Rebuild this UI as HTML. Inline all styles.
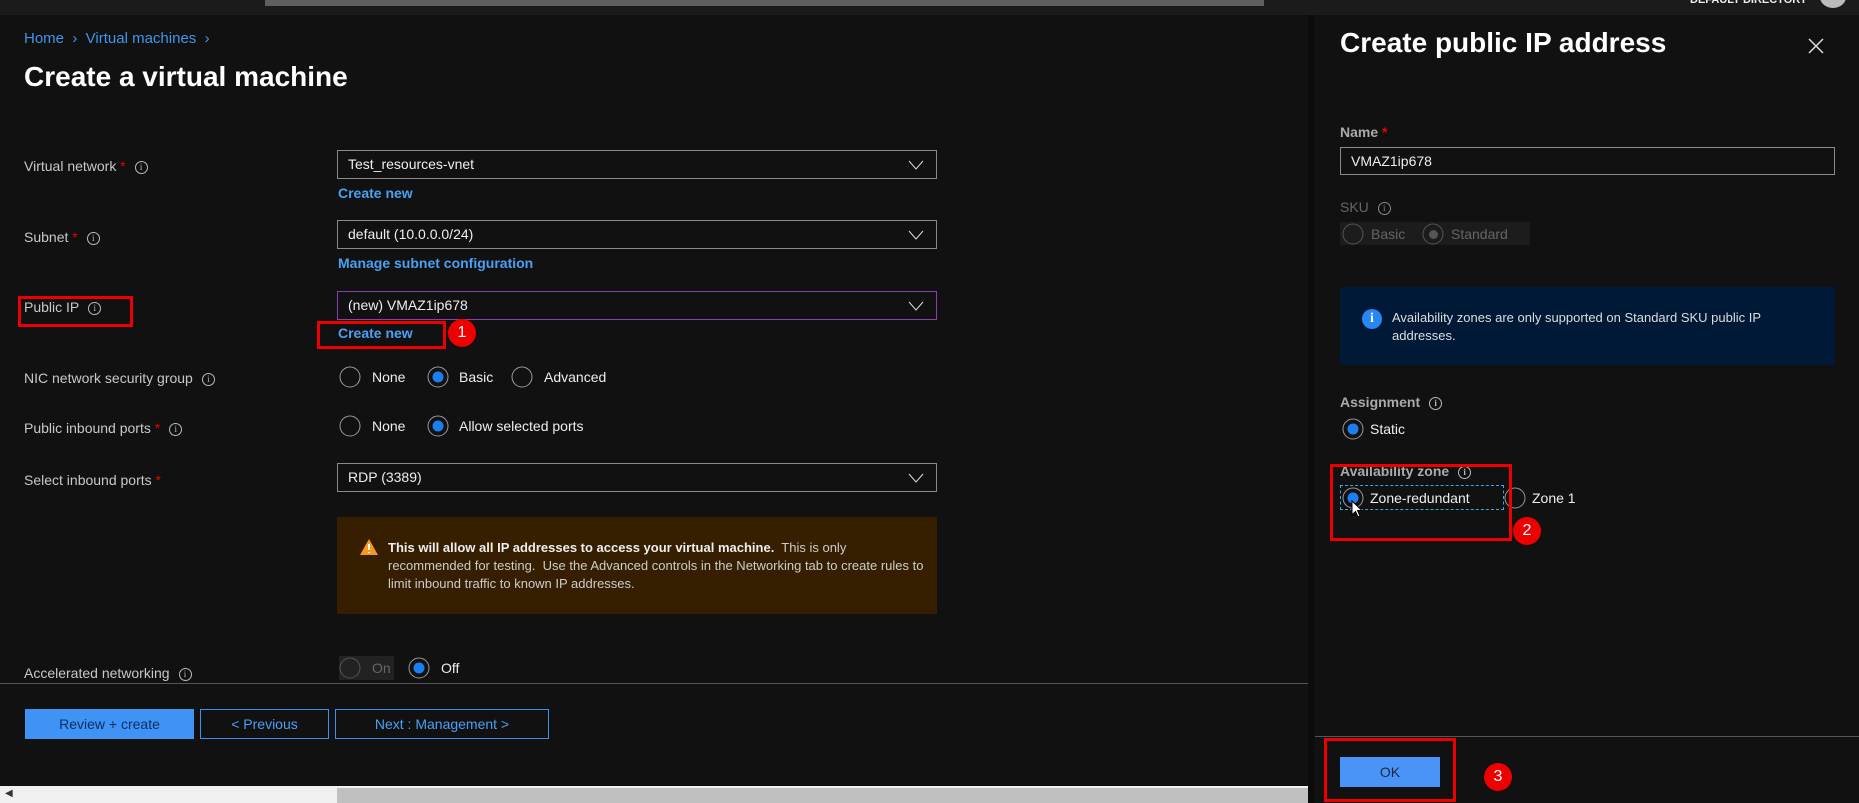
<!DOCTYPE html>
<html><head><meta charset="utf-8"><style>
*{margin:0;padding:0;box-sizing:border-box}
body{width:1859px;height:803px;background:#111;position:relative;overflow:hidden;font-family:"Liberation Sans",sans-serif;color:#ddd}
.a{position:absolute;white-space:nowrap}
.lbl{font-size:14px;color:#c8c8c8;transform:translateY(-50%)}
.req{color:#e00}
.info{display:inline-block;width:13px;height:13px;border:1px solid #bbb;border-radius:50%;font-size:9px;line-height:11px;text-align:center;color:#bbb;margin-left:9px;vertical-align:1px;font-family:"Liberation Serif",serif}
.dd{border:1px solid #8a8a8a;height:29px;font-size:14px;color:#eee;padding-left:10px;line-height:27px}
.dd svg{position:absolute;right:12px;top:9px}
.link{font-size:14px;color:#4aa0f5;font-weight:bold;transform:translateY(-50%)}
.radio{width:21px;height:21px;border:1px solid #999;border-radius:50%;transform:translate(-50%,-50%)}
.radio.on::after{content:"";position:absolute;left:4px;top:4px;width:11px;height:11px;border-radius:50%;background:#1a7ff0}
.rt{font-size:14px;color:#eee;transform:translateY(-50%)}
.red{border:3px solid #e00}
.badge{width:28px;height:28px;border-radius:50%;background:#e00;color:#fff;font-size:16px;text-align:center;line-height:28px;transform:translate(-50%,-50%)}
.btn{height:30px;font-size:14px;text-align:center;line-height:28px;border:1px solid #3f8ff0;color:#4aa0f5}
</style></head><body>
<div class="a" style="left:0;top:0;width:1859px;height:15px;background:#1b1b1b"></div>
<div class="a" style="left:265px;top:0;width:999px;height:6px;background:#5f5f5f"></div>
<div class="a" style="left:1690px;top:-6px;font-size:11px;font-weight:bold;color:#eee">DEFAULT DIRECTORY</div>
<div class="a" style="left:1820px;top:-14px;width:26px;height:22px;border-radius:50%;background:#bbb"></div>

<div class="a" style="left:24px;top:30px;font-size:15px;color:#3f96ec">Home &nbsp;›&nbsp; Virtual machines &nbsp;›</div>
<div class="a" style="left:24px;top:61px;font-size:28px;font-weight:bold;color:#fff">Create a virtual machine</div>

<div class="a lbl" style="left:24px;top:166px">Virtual network <span class="req">*</span><span class="info">i</span></div>
<div class="a lbl" style="left:24px;top:237px">Subnet <span class="req">*</span><span class="info">i</span></div>
<div class="a lbl" style="left:24px;top:307px">Public IP<span class="info">i</span></div>
<div class="a lbl" style="left:24px;top:378px">NIC network security group<span class="info">i</span></div>
<div class="a lbl" style="left:24px;top:428px">Public inbound ports <span class="req">*</span><span class="info">i</span></div>
<div class="a lbl" style="left:24px;top:480px">Select inbound ports <span class="req">*</span></div>
<div class="a lbl" style="left:24px;top:673px">Accelerated networking<span class="info">i</span></div>

<div class="a dd" style="left:337px;top:150px;width:600px">Test_resources-vnet<svg width="16" height="10"><path d="M1 1L8 9L15 1" stroke="#ddd" fill="none"/></svg></div>
<div class="a dd" style="left:337px;top:220px;width:600px">default (10.0.0.0/24)<svg width="16" height="10"><path d="M1 1L8 9L15 1" stroke="#ddd" fill="none"/></svg></div>
<div class="a dd" style="left:337px;top:291px;width:600px;border-color:#8a3fb5">(new) VMAZ1ip678<svg width="16" height="10"><path d="M1 1L8 9L15 1" stroke="#ddd" fill="none"/></svg></div>
<div class="a dd" style="left:337px;top:463px;width:600px">RDP (3389)<svg width="16" height="10"><path d="M1 1L8 9L15 1" stroke="#ddd" fill="none"/></svg></div>

<div class="a link" style="left:338px;top:193px">Create new</div>
<div class="a link" style="left:338px;top:263px">Manage subnet configuration</div>
<div class="a link" style="left:338px;top:333px">Create new</div>

<div class="a red" style="left:18px;top:296px;width:115px;height:31px"></div>
<div class="a red" style="left:317px;top:321px;width:129px;height:28px"></div>
<div class="a badge" style="left:462px;top:333px">1</div>

<div class="a radio" style="left:350px;top:377px"></div><div class="a rt" style="left:372px;top:377px">None</div>
<div class="a radio on" style="left:438px;top:377px"></div><div class="a rt" style="left:459px;top:377px">Basic</div>
<div class="a radio" style="left:522px;top:377px"></div><div class="a rt" style="left:544px;top:377px">Advanced</div>

<div class="a radio" style="left:350px;top:426px"></div><div class="a rt" style="left:372px;top:426px">None</div>
<div class="a radio on" style="left:438px;top:426px"></div><div class="a rt" style="left:459px;top:426px">Allow selected ports</div>

<div class="a" style="left:337px;top:517px;width:600px;height:97px;background:#351f00"></div>
<svg class="a" style="left:359px;top:538px" width="20" height="18"><path d="M10 1L19 17H1Z" fill="#f59a1c"/><path d="M10 6V12M10 14V15" stroke="#fff" stroke-width="2"/></svg>
<div class="a" style="left:388px;top:539px;font-size:13px;line-height:18px;color:#ccc;white-space:normal;width:540px"><b style="color:#eee">This will allow all IP addresses to access your virtual machine.</b>&nbsp; This is only recommended for testing.&nbsp; Use the Advanced controls in the Networking tab to create rules to limit inbound traffic to known IP addresses.</div>

<div class="a" style="left:339px;top:656px;width:55px;height:24px;background:#222"></div>
<div class="a radio" style="left:350px;top:668px;border-color:#555"></div><div class="a rt" style="left:372px;top:668px;color:#666">On</div>
<div class="a radio on" style="left:419px;top:668px"></div><div class="a rt" style="left:441px;top:668px">Off</div>

<div class="a" style="left:0;top:683px;width:1314px;height:1px;background:#555"></div>
<div class="a btn" style="left:25px;top:709px;width:169px;background:#3f93f5;color:#0b2f66;border-color:#3f93f5">Review + create</div>
<div class="a btn" style="left:200px;top:709px;width:129px">&lt; Previous</div>
<div class="a btn" style="left:335px;top:709px;width:214px">Next : Management &gt;</div>

<div class="a" style="left:0;top:786px;width:1314px;height:17px;background:#f0f0f0"></div>
<div class="a" style="left:337px;top:788px;width:977px;height:15px;background:#c0c0c0"></div>
<div class="a" style="left:5px;top:788px;font-size:10px;color:#333">◀</div>

<!-- right panel -->
<div class="a" style="left:1308px;top:15px;width:6px;height:788px;background:#0c0c0c"></div>
<div class="a" style="left:1314px;top:15px;width:545px;height:788px;background:#111"></div>
<div class="a" style="left:1340px;top:27px;font-size:28px;font-weight:bold;color:#fff">Create public IP address</div>
<svg class="a" style="left:1808px;top:38px" width="16" height="16"><path d="M1 1L15 15M15 1L1 15" stroke="#ddd" stroke-width="1.5"/></svg>

<div class="a lbl" style="left:1340px;top:132px;font-weight:bold;color:#aaa">Name <span class="req">*</span></div>
<div class="a dd" style="left:1340px;top:147px;width:495px;height:28px;line-height:26px">VMAZ1ip678</div>

<div class="a lbl" style="left:1340px;top:207px;color:#666">SKU<span class="info" style="border-color:#888;color:#888">i</span></div>
<div class="a" style="left:1340px;top:222px;width:190px;height:23px;background:#1c1c1c"></div>
<div class="a radio" style="left:1353px;top:234px;border-color:#555"></div><div class="a rt" style="left:1371px;top:234px;color:#666">Basic</div>
<div class="a radio" style="left:1433px;top:234px;border-color:#555"></div><div class="a" style="left:1429px;top:230px;width:9px;height:9px;border-radius:50%;background:#555"></div><div class="a rt" style="left:1451px;top:234px;color:#666">Standard</div>

<div class="a" style="left:1340px;top:287px;width:495px;height:78px;background:#001937"></div>
<div class="a" style="left:1362px;top:309px;width:20px;height:20px;border-radius:50%;background:#2787f5;color:#fff;font-weight:bold;font-size:14px;text-align:center;line-height:20px;font-family:'Liberation Serif',serif">i</div>
<div class="a" style="left:1392px;top:309px;width:410px;white-space:normal;font-size:13px;line-height:18px;color:#ddd">Availability zones are only supported on Standard SKU public IP addresses.</div>

<div class="a lbl" style="left:1340px;top:402px;font-weight:bold;color:#aaa">Assignment<span class="info">i</span></div>
<div class="a radio on" style="left:1353px;top:429px"></div><div class="a rt" style="left:1370px;top:429px">Static</div>

<div class="a lbl" style="left:1340px;top:471px;font-weight:bold;color:#aaa">Availability zone<span class="info">i</span></div>
<div class="a" style="left:1340px;top:485px;width:164px;height:25px;border:1px dashed #3aa7e0"></div>
<div class="a radio on" style="left:1353px;top:498px"></div><div class="a rt" style="left:1370px;top:498px">Zone-redundant</div>
<div class="a radio" style="left:1515px;top:498px"></div><div class="a rt" style="left:1532px;top:498px">Zone 1</div>
<svg class="a" style="left:1351px;top:500px" width="12" height="18"><path d="M1 1V15L4.5 11.5L7 17L9 16L6.5 10.5H11Z" fill="#fff" stroke="#000"/></svg>
<div class="a red" style="left:1330px;top:464px;width:182px;height:77px"></div>
<div class="a badge" style="left:1527px;top:531px">2</div>

<div class="a" style="left:1315px;top:736px;width:544px;height:1px;background:#555"></div>
<div class="a btn" style="left:1340px;top:757px;width:100px;background:#4a94f7;border-color:#4a94f7;color:#1a2a44">OK</div>
<div class="a red" style="left:1324px;top:738px;width:132px;height:64px"></div>
<div class="a badge" style="left:1498px;top:777px">3</div>
</body></html>
